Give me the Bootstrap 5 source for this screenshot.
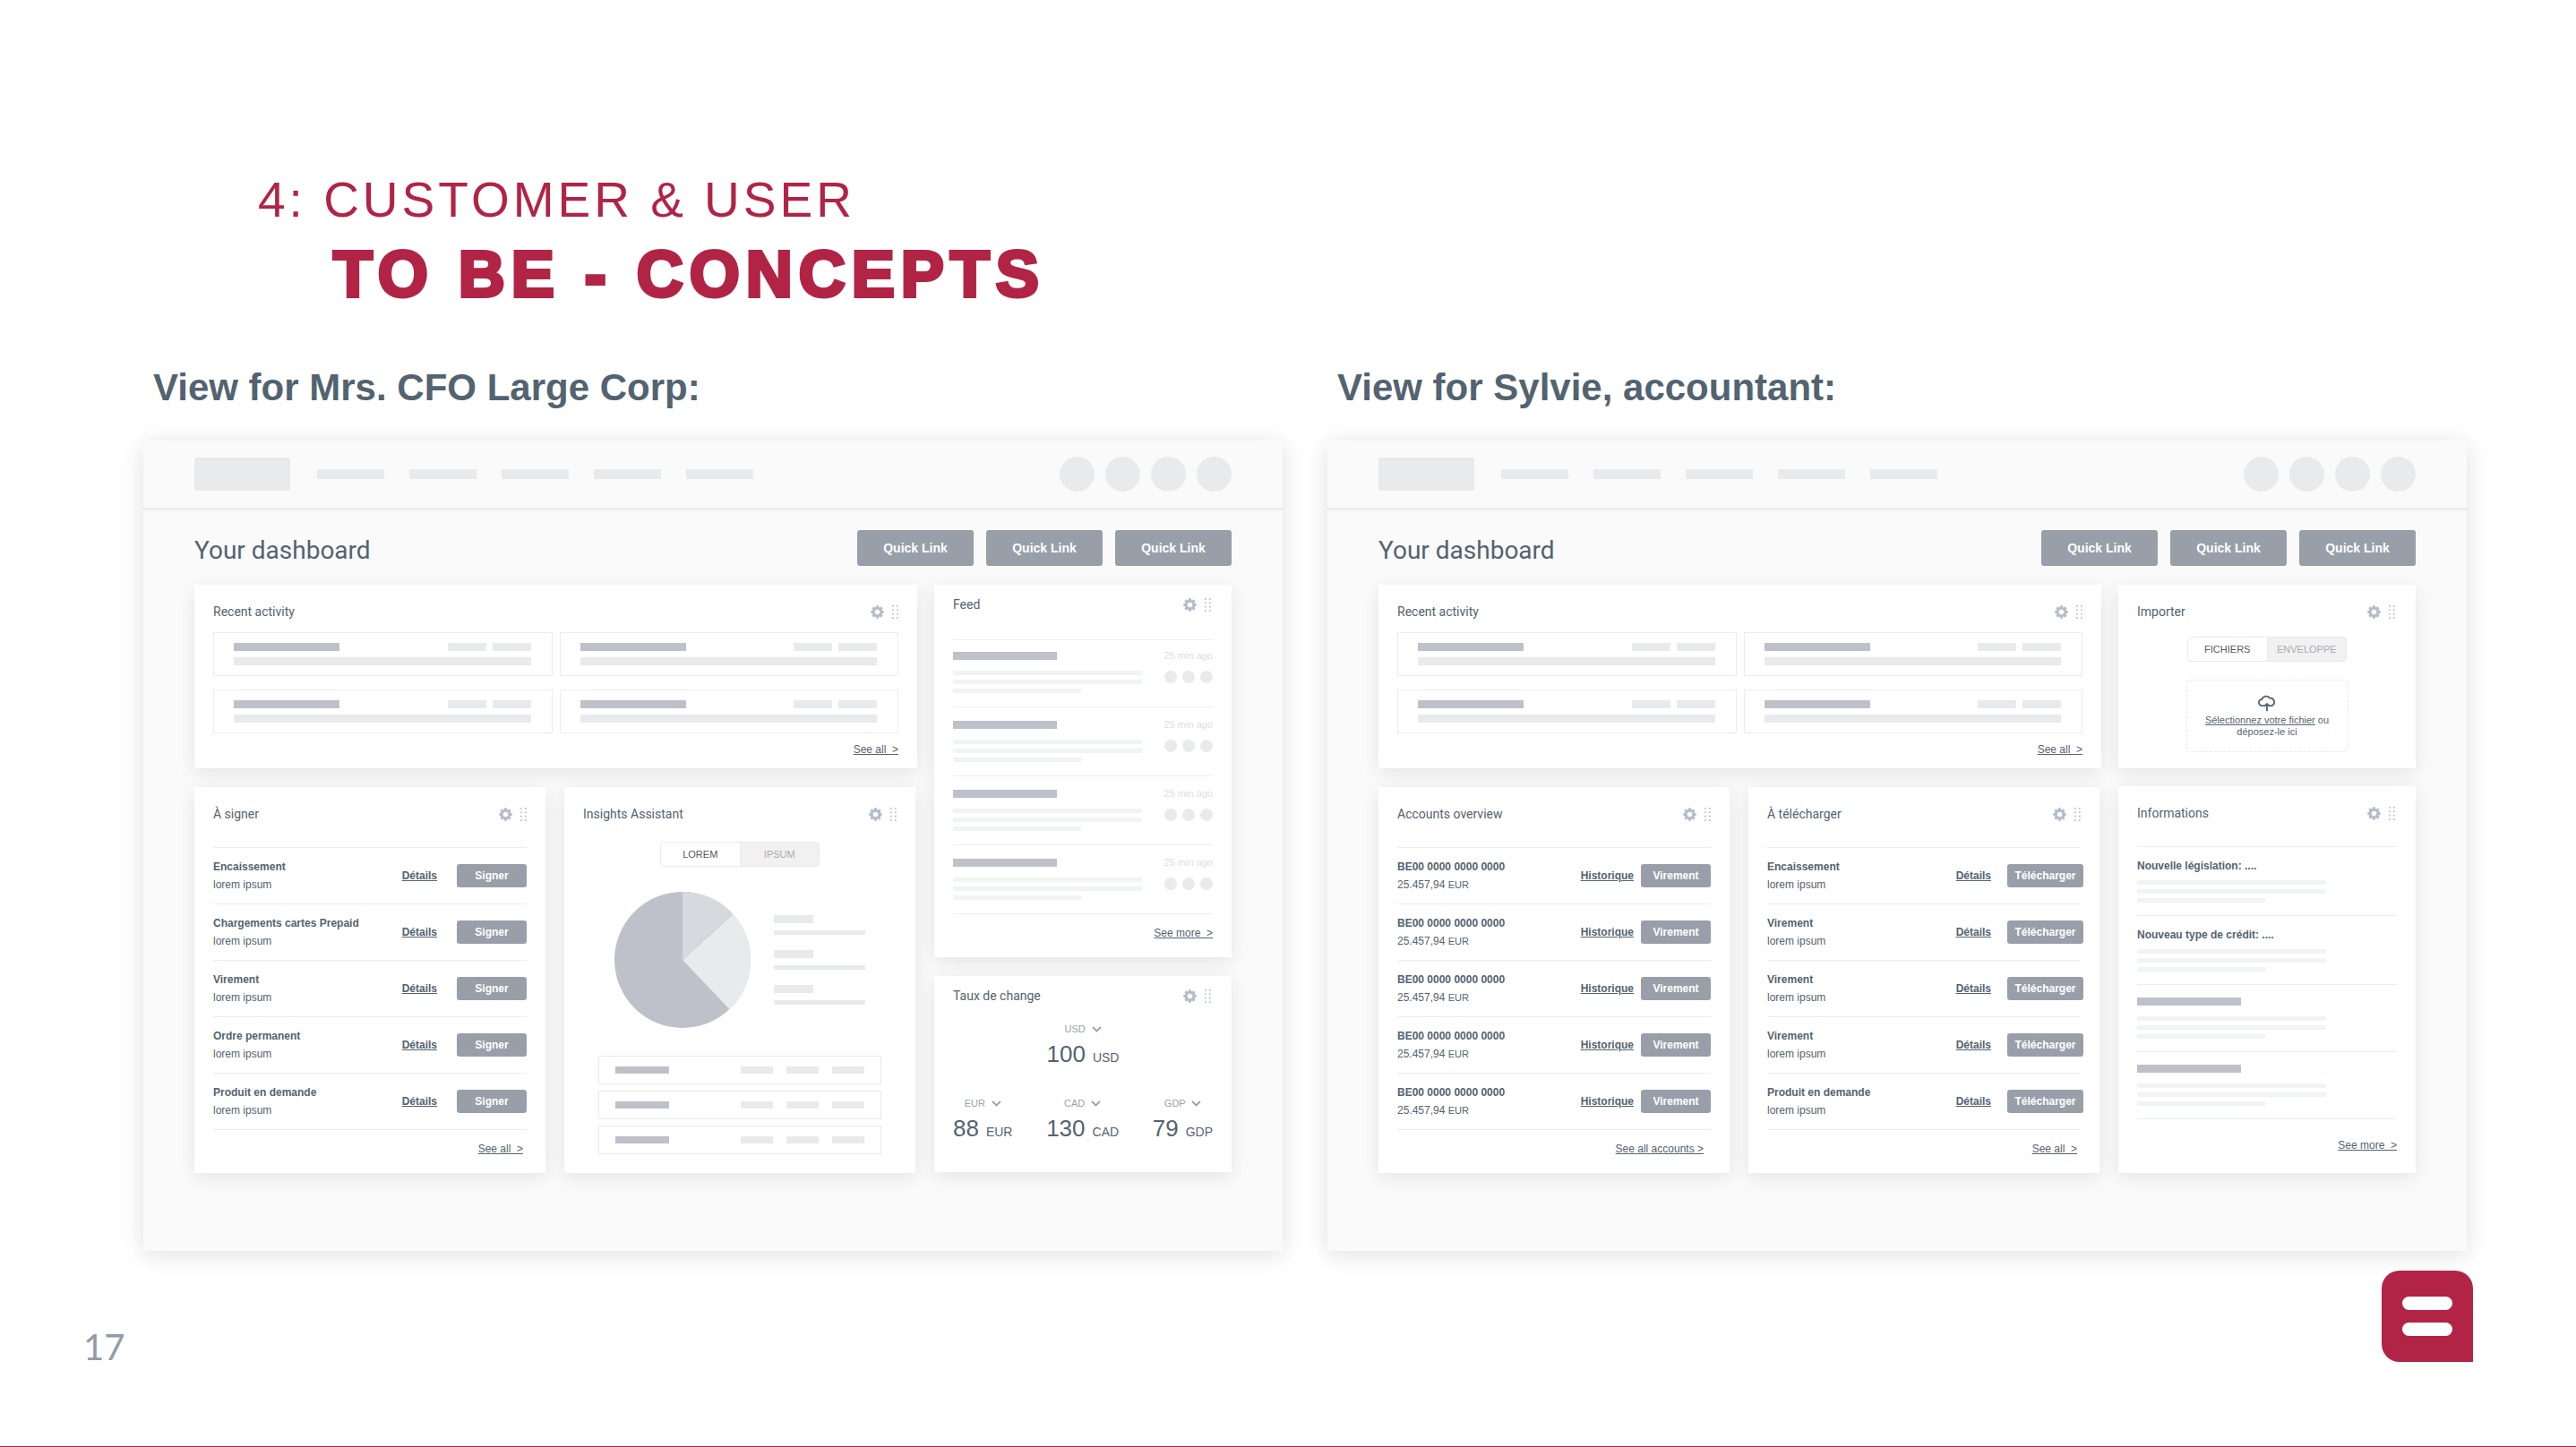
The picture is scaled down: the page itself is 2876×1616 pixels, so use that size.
<!DOCTYPE html>
<html lang="en">
<head>
<meta charset="utf-8">
<meta name="viewport" content="width=device-width, initial-scale=1">
<title>Customer &amp; User: To be - Concepts</title>
<link href="https://cdn.jsdelivr.net/npm/bootstrap@5.3.0/dist/css/bootstrap.min.css" rel="stylesheet">
<style>
:root{--crimson:#b12445;--slate:#536370;--steel:#989fa9;--bar:#e9eaec;--bar-dark:#bec1c9;--bar-faint:#f1f3f4;--rule:#eceded}
body{font-family:"Liberation Sans",Arial,sans-serif;color:var(--slate);background:#fff;font-size:12px;line-height:20px}
.slide{min-height:100vh;border-bottom:1px solid var(--crimson)}
.slide-head{padding:190px 122px 0 288px;color:var(--crimson);margin-bottom:52px}
.slide-head h1{margin:0}
.head-top{font-size:55px;line-height:66px;font-weight:400;letter-spacing:4px}
.head-main{font-size:72px;line-height:100px;font-weight:700;letter-spacing:7px;-webkit-text-stroke:4px var(--crimson);padding-left:84px}
.views{padding:0 122px 0 160px;display:grid;grid-template-columns:1fr 1fr;gap:50px}
.view-title{font-size:42px;line-height:50px;font-weight:700;margin:0 0 34px;padding-left:11px}
.screen{background:#fafafa;box-shadow:0 4px 26px rgba(0,0,0,.13);padding-bottom:87px}
.topbar{padding:0 57px;height:78px;border-bottom:3px solid #ececec}
.brand-block{width:107px;height:37px;border-radius:3px;background:var(--bar);margin-right:30px}
.nav-block{width:75px;height:11px;background:var(--bar)}
.nav-blocks{gap:28px}
.round-block{width:39px;height:39px;border-radius:50%;background:var(--bar)}
.rounds{gap:12px}
.screen-body{padding:22px 57px 0}
.dash-title{font-family:Roboto,sans-serif;font-size:28px;line-height:34px;font-weight:400;margin:0}
.quick{gap:14px}
.btn-steel{background:var(--steel);color:#fff;font-weight:700;border:0;border-radius:3px;padding:0;font-size:12px;line-height:26px;width:78px}
.btn-steel:hover{background:#858c97;color:#fff}
.quick .btn-steel{font-size:14px;line-height:40px;width:130px}
.btn-steel.load{width:85px;margin-right:-3px}
.board{margin-top:21px;display:grid;grid-template-columns:807fr 332fr;gap:19px}
.stack{gap:21px}
.side{gap:20px}
.pair{display:grid;grid-template-columns:1fr 1fr;gap:21px;padding-right:2px}
.tile{background:#fff;box-shadow:0 5px 20px rgba(0,0,0,.09);padding:20px 21px 0}
.tile-low{padding-top:12px}
.tile-head h3{font-family:Roboto,sans-serif;font-size:14px;line-height:20px;font-weight:400;margin:0}
.narrow .tile-head{padding-right:2px}
.tools{color:#b5bdcb}
.tools svg,.cloud,.chev{display:block}
.bar{display:block;height:9px;background:var(--bar)}
.bar.dk{background:var(--bar-dark)}
.w43{width:43px}.w118{width:118px}.w116{width:116px}
.entries{display:grid;grid-template-columns:1fr 1fr;gap:15px 8px;margin-top:13px}
.entry{border:1px solid #ececec;height:49px;padding:11px 23px 0 22px}
.entry .bar+.bar{margin-left:7px}
.entry .long{margin-top:7px}
.more{text-align:right;margin-top:11px}
.more a,.act,.drop a{color:inherit;text-decoration:underline}
.recent .more{margin:8px 0 0;padding-bottom:11px}
.rules{margin:27px 0 0;border-top:1px solid var(--rule)}
.rules>li{border-bottom:1px solid var(--rule)}
.line-item{height:63px}
.act{font-weight:700;margin-right:22px}
.accounts .act{margin-right:8px}
.loads .act{margin-right:18px}
.cur{font-size:11px}
.foot17{padding-bottom:17px}
.switch{width:178px;margin-top:18px}
.insights .switch{margin-top:21px}
.switch .btn{font-size:11px;line-height:26px;padding:0;width:50%;border:1px solid #e9eaeb;background:#f1f1f1;color:#a9abae;border-radius:4px}
.switch .btn-check:checked+.btn{background:#fff;color:#55585c;border-color:#e9eaeb}
.chart{margin-top:28px;gap:26px;padding-left:35px}
.keys{display:grid;gap:17px}
.key-name{width:44px;height:9px;background:var(--bar)}
.key-val{width:102px;height:5px;background:var(--bar);margin-top:8px}
.sheet{margin:31px 17px 21px;display:grid;gap:7px}
.sheet>div{border:1px solid #e9eaec;height:32px;padding:0 18px;gap:15px}
.sheet .bar{width:36px;height:8px}
.sheet .bar.dk{width:60px}
.feed .rules{margin-top:29px}
.post{padding:15px 0}
.post:first-child{padding-top:13px}
.ago{font-size:11px;line-height:9px;color:#dcdee1}
.dots3{gap:6px}
.dots3 i{width:14px;height:14px;border-radius:50%;background:var(--bar)}
.para{display:grid;gap:5px}
.para i{display:block;width:211px;height:5px;background:var(--bar-faint)}
.para i:last-child{width:143px}
.post .under{margin-top:12px}
.rates{padding-bottom:31px}
.rate{text-align:center}
.rate select{appearance:none;border:0;background:none;padding:0;margin:0;font:inherit;line-height:20px;color:#99a1ab;font-size:11px}
.rate .pick{gap:6px;color:#99a1ab;height:20px}
.amount{font-size:26px;line-height:36px;white-space:nowrap}
.amount span{font-size:14px;line-height:14px;margin-left:8px}
.rate-base{margin-top:17px}
.rate-row{margin-top:27px}
.drop{width:181px;height:81px;border:1px dashed #e6e8ea;border-radius:3px;margin:20px auto 18px;padding-top:16px;font-size:11px;line-height:13px;text-align:center}
.drop svg{margin:0 auto 3px}
.note{padding:11px 0 14px}
.note .para{margin-top:6px}
.note-blank{padding:14px 0}
.note-blank .para{margin-top:12px}
.infos .more{margin-top:19px;padding-bottom:21px}
.slide-foot{padding:22px 115px 94px 93px}
.page-no{font-family:Lato,sans-serif;font-size:40px;line-height:34px;color:#929ba7}
</style>
<script src="https://cdn.jsdelivr.net/npm/bootstrap@5.3.0/dist/js/bootstrap.bundle.min.js" defer></script>
</head>
<body>
<svg class="d-none" aria-hidden="true">
  <symbol id="tools" viewBox="0 0 31 15">
    <g stroke="currentColor" fill="none">
      <circle cx="7.5" cy="7.5" r="4.3" stroke-width="3"/>
      <path stroke-width="3" d="M7.5 .3v2.4M7.5 12.3v2.4M.3 7.5h2.4M12.3 7.5h2.4M2.4 2.4l1.7 1.7M10.9 10.9l1.7 1.7M2.4 12.6l1.7-1.7M10.9 4.1l1.7-1.7"/>
    </g>
    <path fill="currentColor" d="M24 0h1.7v1.7H24zM29 0h1.7v1.7H29zM24 4.4h1.7v1.7H24zM29 4.4h1.7v1.7H29zM24 8.8h1.7v1.7H24zM29 8.8h1.7v1.7H29zM24 13.2h1.7v1.7H24zM29 13.2h1.7v1.7H29z"/>
  </symbol>
  <symbol id="chev" viewBox="0 0 11 7"><path d="M1 1l4.500 4.500L10 1" fill="none" stroke="currentColor" stroke-width="1.800"/></symbol>
</svg>
<div class="slide d-flex flex-column">
  <header class="slide-head">
    <h1><span class="head-top d-block">4: CUSTOMER &amp; USER</span><span class="head-main d-block">TO BE - CONCEPTS</span></h1>
  </header>
  <main class="views">
    <section>
      <h2 class="view-title">View for Mrs. CFO Large Corp:</h2>
      <div class="screen">
        <div class="topbar d-flex align-items-center">
          <div class="brand-block"></div>
          <div class="nav-blocks d-flex"><div class="nav-block"></div><div class="nav-block"></div><div class="nav-block"></div><div class="nav-block"></div><div class="nav-block"></div></div>
          <div class="rounds d-flex ms-auto"><div class="round-block"></div><div class="round-block"></div><div class="round-block"></div><div class="round-block"></div></div>
        </div>
        <div class="screen-body">
          <div class="d-flex justify-content-between align-items-end">
            <h3 class="dash-title">Your dashboard</h3>
            <div class="quick d-flex"><button type="button" class="btn btn-steel">Quick Link</button><button type="button" class="btn btn-steel">Quick Link</button><button type="button" class="btn btn-steel">Quick Link</button></div>
          </div>
          <div class="board">
            <div class="stack d-flex flex-column">
              <article class="tile recent">
                <div class="tile-head d-flex justify-content-between align-items-center"><h3>Recent activity</h3><span class="tools"><svg width="31" height="15"><use href="#tools"/></svg></span></div>
                <div class="entries">
                  <div class="entry"><div class="d-flex"><span class="bar dk w118 me-auto"></span><span class="bar w43"></span><span class="bar w43"></span></div><div class="bar long"></div></div>
                  <div class="entry"><div class="d-flex"><span class="bar dk w118 me-auto"></span><span class="bar w43"></span><span class="bar w43"></span></div><div class="bar long"></div></div>
                  <div class="entry"><div class="d-flex"><span class="bar dk w118 me-auto"></span><span class="bar w43"></span><span class="bar w43"></span></div><div class="bar long"></div></div>
                  <div class="entry"><div class="d-flex"><span class="bar dk w118 me-auto"></span><span class="bar w43"></span><span class="bar w43"></span></div><div class="bar long"></div></div>
                </div>
                <div class="more"><a href="#">See all&nbsp; &gt;</a></div>
              </article>
              <div class="pair">
                <article class="tile">
                  <div class="tile-head d-flex justify-content-between align-items-center"><h3>À signer</h3><span class="tools"><svg width="31" height="15"><use href="#tools"/></svg></span></div>
                  <ul class="rules list-unstyled">
                    <li class="line-item d-flex align-items-center"><div class="me-auto"><strong>Encaissement</strong><br>lorem ipsum</div><a class="act" href="#">Détails</a><button type="button" class="btn btn-steel">Signer</button></li>
                    <li class="line-item d-flex align-items-center"><div class="me-auto"><strong>Chargements cartes Prepaid</strong><br>lorem ipsum</div><a class="act" href="#">Détails</a><button type="button" class="btn btn-steel">Signer</button></li>
                    <li class="line-item d-flex align-items-center"><div class="me-auto"><strong>Virement</strong><br>lorem ipsum</div><a class="act" href="#">Détails</a><button type="button" class="btn btn-steel">Signer</button></li>
                    <li class="line-item d-flex align-items-center"><div class="me-auto"><strong>Ordre permanent</strong><br>lorem ipsum</div><a class="act" href="#">Détails</a><button type="button" class="btn btn-steel">Signer</button></li>
                    <li class="line-item d-flex align-items-center"><div class="me-auto"><strong>Produit en demande</strong><br>lorem ipsum</div><a class="act" href="#">Détails</a><button type="button" class="btn btn-steel">Signer</button></li>
                  </ul>
                  <div class="more foot17 pe-1"><a href="#">See all&nbsp; &gt;</a></div>
                </article>
                <article class="tile insights">
                  <div class="tile-head d-flex justify-content-between align-items-center"><h3>Insights Assistant</h3><span class="tools"><svg width="31" height="15"><use href="#tools"/></svg></span></div>
                  <div class="switch btn-group d-flex mx-auto" role="group" aria-label="Data set">
                    <input type="radio" class="btn-check" name="dataset" id="ds1" checked><label class="btn" for="ds1">LOREM</label>
                    <input type="radio" class="btn-check" name="dataset" id="ds2"><label class="btn" for="ds2">IPSUM</label>
                  </div>
                  <div class="chart d-flex align-items-center">
                    <svg width="152" height="152" viewBox="-76 -76 152 152" role="img" aria-label="Share by category">
                      <circle r="76" fill="#bec1c9"/>
                      <path d="M0 0L56.200-51.200A76 76 0 0 1 52.400 55Z" fill="#e9eaec"/>
                      <path d="M0 0V-76A76 76 0 0 1 56.200-51.200Z" fill="#d6d9dd"/>
                      <path d="M0-76V0L56.200-51.200" fill="none" stroke="#cdd0d5" stroke-width="1"/>
                    </svg>
                    <div class="keys">
                      <div><div class="key-name"></div><div class="key-val"></div></div>
                      <div><div class="key-name"></div><div class="key-val"></div></div>
                      <div><div class="key-name"></div><div class="key-val"></div></div>
                    </div>
                  </div>
                  <div class="sheet">
                    <div class="d-flex align-items-center"><span class="bar dk me-auto"></span><span class="bar"></span><span class="bar"></span><span class="bar"></span></div>
                    <div class="d-flex align-items-center"><span class="bar dk me-auto"></span><span class="bar"></span><span class="bar"></span><span class="bar"></span></div>
                    <div class="d-flex align-items-center"><span class="bar dk me-auto"></span><span class="bar"></span><span class="bar"></span><span class="bar"></span></div>
                  </div>
                </article>
              </div>
            </div>
            <div class="stack narrow d-flex flex-column">
              <article class="tile tile-low feed">
                <div class="tile-head d-flex justify-content-between align-items-center"><h3>Feed</h3><span class="tools"><svg width="31" height="15"><use href="#tools"/></svg></span></div>
                <ul class="rules list-unstyled">
                  <li class="post"><div class="d-flex justify-content-between"><span class="bar dk w116"></span><span class="ago">25 min ago</span></div><div class="under d-flex justify-content-between"><div class="para"><i></i><i></i><i></i></div><div class="dots3 d-flex"><i></i><i></i><i></i></div></div></li>
                  <li class="post"><div class="d-flex justify-content-between"><span class="bar dk w116"></span><span class="ago">25 min ago</span></div><div class="under d-flex justify-content-between"><div class="para"><i></i><i></i><i></i></div><div class="dots3 d-flex"><i></i><i></i><i></i></div></div></li>
                  <li class="post"><div class="d-flex justify-content-between"><span class="bar dk w116"></span><span class="ago">25 min ago</span></div><div class="under d-flex justify-content-between"><div class="para"><i></i><i></i><i></i></div><div class="dots3 d-flex"><i></i><i></i><i></i></div></div></li>
                  <li class="post"><div class="d-flex justify-content-between"><span class="bar dk w116"></span><span class="ago">25 min ago</span></div><div class="under d-flex justify-content-between"><div class="para"><i></i><i></i><i></i></div><div class="dots3 d-flex"><i></i><i></i><i></i></div></div></li>
                </ul>
                <div class="more foot17"><a href="#">See more&nbsp; &gt;</a></div>
              </article>
              <article class="tile tile-low rates">
                <div class="tile-head d-flex justify-content-between align-items-center"><h3>Taux de change</h3><span class="tools"><svg width="31" height="15"><use href="#tools"/></svg></span></div>
                <div class="rate rate-base">
                  <div class="pick d-flex justify-content-center align-items-center"><select aria-label="Base currency"><option>USD</option></select><svg class="chev" width="11" height="7"><use href="#chev"/></svg></div>
                  <div class="amount">100<span>USD</span></div>
                </div>
                <div class="rate-row d-flex justify-content-between">
                  <div class="rate"><div class="pick d-flex justify-content-center align-items-center"><select aria-label="First currency"><option>EUR</option></select><svg class="chev" width="11" height="7"><use href="#chev"/></svg></div><div class="amount">88<span>EUR</span></div></div>
                  <div class="rate"><div class="pick d-flex justify-content-center align-items-center"><select aria-label="Second currency"><option>CAD</option></select><svg class="chev" width="11" height="7"><use href="#chev"/></svg></div><div class="amount">130<span>CAD</span></div></div>
                  <div class="rate"><div class="pick d-flex justify-content-center align-items-center"><select aria-label="Third currency"><option>GDP</option></select><svg class="chev" width="11" height="7"><use href="#chev"/></svg></div><div class="amount">79<span>GDP</span></div></div>
                </div>
              </article>
            </div>
          </div>
        </div>
      </div>
    </section>
    <section>
      <h2 class="view-title">View for Sylvie, accountant:</h2>
      <div class="screen">
        <div class="topbar d-flex align-items-center">
          <div class="brand-block"></div>
          <div class="nav-blocks d-flex"><div class="nav-block"></div><div class="nav-block"></div><div class="nav-block"></div><div class="nav-block"></div><div class="nav-block"></div></div>
          <div class="rounds d-flex ms-auto"><div class="round-block"></div><div class="round-block"></div><div class="round-block"></div><div class="round-block"></div></div>
        </div>
        <div class="screen-body">
          <div class="d-flex justify-content-between align-items-end">
            <h3 class="dash-title">Your dashboard</h3>
            <div class="quick d-flex"><button type="button" class="btn btn-steel">Quick Link</button><button type="button" class="btn btn-steel">Quick Link</button><button type="button" class="btn btn-steel">Quick Link</button></div>
          </div>
          <div class="board">
            <div class="stack d-flex flex-column">
              <article class="tile recent">
                <div class="tile-head d-flex justify-content-between align-items-center"><h3>Recent activity</h3><span class="tools"><svg width="31" height="15"><use href="#tools"/></svg></span></div>
                <div class="entries">
                  <div class="entry"><div class="d-flex"><span class="bar dk w118 me-auto"></span><span class="bar w43"></span><span class="bar w43"></span></div><div class="bar long"></div></div>
                  <div class="entry"><div class="d-flex"><span class="bar dk w118 me-auto"></span><span class="bar w43"></span><span class="bar w43"></span></div><div class="bar long"></div></div>
                  <div class="entry"><div class="d-flex"><span class="bar dk w118 me-auto"></span><span class="bar w43"></span><span class="bar w43"></span></div><div class="bar long"></div></div>
                  <div class="entry"><div class="d-flex"><span class="bar dk w118 me-auto"></span><span class="bar w43"></span><span class="bar w43"></span></div><div class="bar long"></div></div>
                </div>
                <div class="more"><a href="#">See all&nbsp; &gt;</a></div>
              </article>
              <div class="pair">
                <article class="tile accounts">
                  <div class="tile-head d-flex justify-content-between align-items-center"><h3>Accounts overview</h3><span class="tools"><svg width="31" height="15"><use href="#tools"/></svg></span></div>
                  <ul class="rules list-unstyled">
                    <li class="line-item d-flex align-items-center"><div class="me-auto"><strong>BE00 0000 0000 0000</strong><br>25.457,94 <span class="cur">EUR</span></div><a class="act" href="#">Historique</a><button type="button" class="btn btn-steel">Virement</button></li>
                    <li class="line-item d-flex align-items-center"><div class="me-auto"><strong>BE00 0000 0000 0000</strong><br>25.457,94 <span class="cur">EUR</span></div><a class="act" href="#">Historique</a><button type="button" class="btn btn-steel">Virement</button></li>
                    <li class="line-item d-flex align-items-center"><div class="me-auto"><strong>BE00 0000 0000 0000</strong><br>25.457,94 <span class="cur">EUR</span></div><a class="act" href="#">Historique</a><button type="button" class="btn btn-steel">Virement</button></li>
                    <li class="line-item d-flex align-items-center"><div class="me-auto"><strong>BE00 0000 0000 0000</strong><br>25.457,94 <span class="cur">EUR</span></div><a class="act" href="#">Historique</a><button type="button" class="btn btn-steel">Virement</button></li>
                    <li class="line-item d-flex align-items-center"><div class="me-auto"><strong>BE00 0000 0000 0000</strong><br>25.457,94 <span class="cur">EUR</span></div><a class="act" href="#">Historique</a><button type="button" class="btn btn-steel">Virement</button></li>
                  </ul>
                  <div class="more foot17 pe-2"><a href="#">See all accounts &gt;</a></div>
                </article>
                <article class="tile loads">
                  <div class="tile-head d-flex justify-content-between align-items-center"><h3>À télécharger</h3><span class="tools"><svg width="31" height="15"><use href="#tools"/></svg></span></div>
                  <ul class="rules list-unstyled">
                    <li class="line-item d-flex align-items-center"><div class="me-auto"><strong>Encaissement</strong><br>lorem ipsum</div><a class="act" href="#">Détails</a><button type="button" class="btn btn-steel load">Télécharger</button></li>
                    <li class="line-item d-flex align-items-center"><div class="me-auto"><strong>Virement</strong><br>lorem ipsum</div><a class="act" href="#">Détails</a><button type="button" class="btn btn-steel load">Télécharger</button></li>
                    <li class="line-item d-flex align-items-center"><div class="me-auto"><strong>Virement</strong><br>lorem ipsum</div><a class="act" href="#">Détails</a><button type="button" class="btn btn-steel load">Télécharger</button></li>
                    <li class="line-item d-flex align-items-center"><div class="me-auto"><strong>Virement</strong><br>lorem ipsum</div><a class="act" href="#">Détails</a><button type="button" class="btn btn-steel load">Télécharger</button></li>
                    <li class="line-item d-flex align-items-center"><div class="me-auto"><strong>Produit en demande</strong><br>lorem ipsum</div><a class="act" href="#">Détails</a><button type="button" class="btn btn-steel load">Télécharger</button></li>
                  </ul>
                  <div class="more foot17 pe-1"><a href="#">See all&nbsp; &gt;</a></div>
                </article>
              </div>
            </div>
            <div class="side narrow d-flex flex-column">
              <article class="tile importer">
                <div class="tile-head d-flex justify-content-between align-items-center"><h3>Importer</h3><span class="tools"><svg width="31" height="15"><use href="#tools"/></svg></span></div>
                <div class="switch btn-group d-flex mx-auto" role="group" aria-label="Import type">
                  <input type="radio" class="btn-check" name="imp" id="im1" checked><label class="btn" for="im1">FICHIERS</label>
                  <input type="radio" class="btn-check" name="imp" id="im2"><label class="btn" for="im2">ENVELOPPE</label>
                </div>
                <div class="drop">
                  <svg class="cloud" width="20" height="19" viewBox="0 0 20 19" fill="none" stroke="currentColor" stroke-width="1.800" stroke-linecap="round" stroke-linejoin="round"><path d="M7.500 12.200H4.600A3.600 3.600 0 0 1 4.400 5A5 5 0 0 1 13.200 3.700A4.400 4.400 0 0 1 15.200 12.200H12.600"/><path d="M10 17.500V10M7.700 12.200L10 9.900L12.300 12.200"/></svg>
                  <a href="#">Sélectionnez votre fichier</a> ou<br>déposez-le ici
                </div>
              </article>
              <article class="tile infos">
                <div class="tile-head d-flex justify-content-between align-items-center"><h3>Informations</h3><span class="tools"><svg width="31" height="15"><use href="#tools"/></svg></span></div>
                <ul class="rules list-unstyled">
                  <li class="note"><strong class="d-block">Nouvelle législation: ....</strong><div class="para"><i></i><i></i><i></i></div></li>
                  <li class="note"><strong class="d-block">Nouveau type de crédit: ....</strong><div class="para"><i></i><i></i><i></i></div></li>
                  <li class="note-blank"><span class="bar dk w116"></span><div class="para"><i></i><i></i><i></i></div></li>
                  <li class="note-blank"><span class="bar dk w116"></span><div class="para"><i></i><i></i><i></i></div></li>
                </ul>
                <div class="more"><a href="#">See more&nbsp; &gt;</a></div>
              </article>
            </div>
          </div>
        </div>
      </div>
    </section>
  </main>
  <footer class="slide-foot d-flex justify-content-between align-items-end">
    <span class="page-no">17</span>
    <svg width="102" height="102" viewBox="0 0 102 102" role="img" aria-label="Logo"><path d="M20 0H82A20 20 0 0 1 102 20V102H20A20 20 0 0 1 0 82V20A20 20 0 0 1 20 0Z" fill="#b12445"/><rect x="23" y="29" width="56" height="15" rx="7.500" fill="#fff"/><rect x="23" y="58" width="56" height="15" rx="7.500" fill="#fff"/></svg>
  </footer>
</div>
</body>
</html>
